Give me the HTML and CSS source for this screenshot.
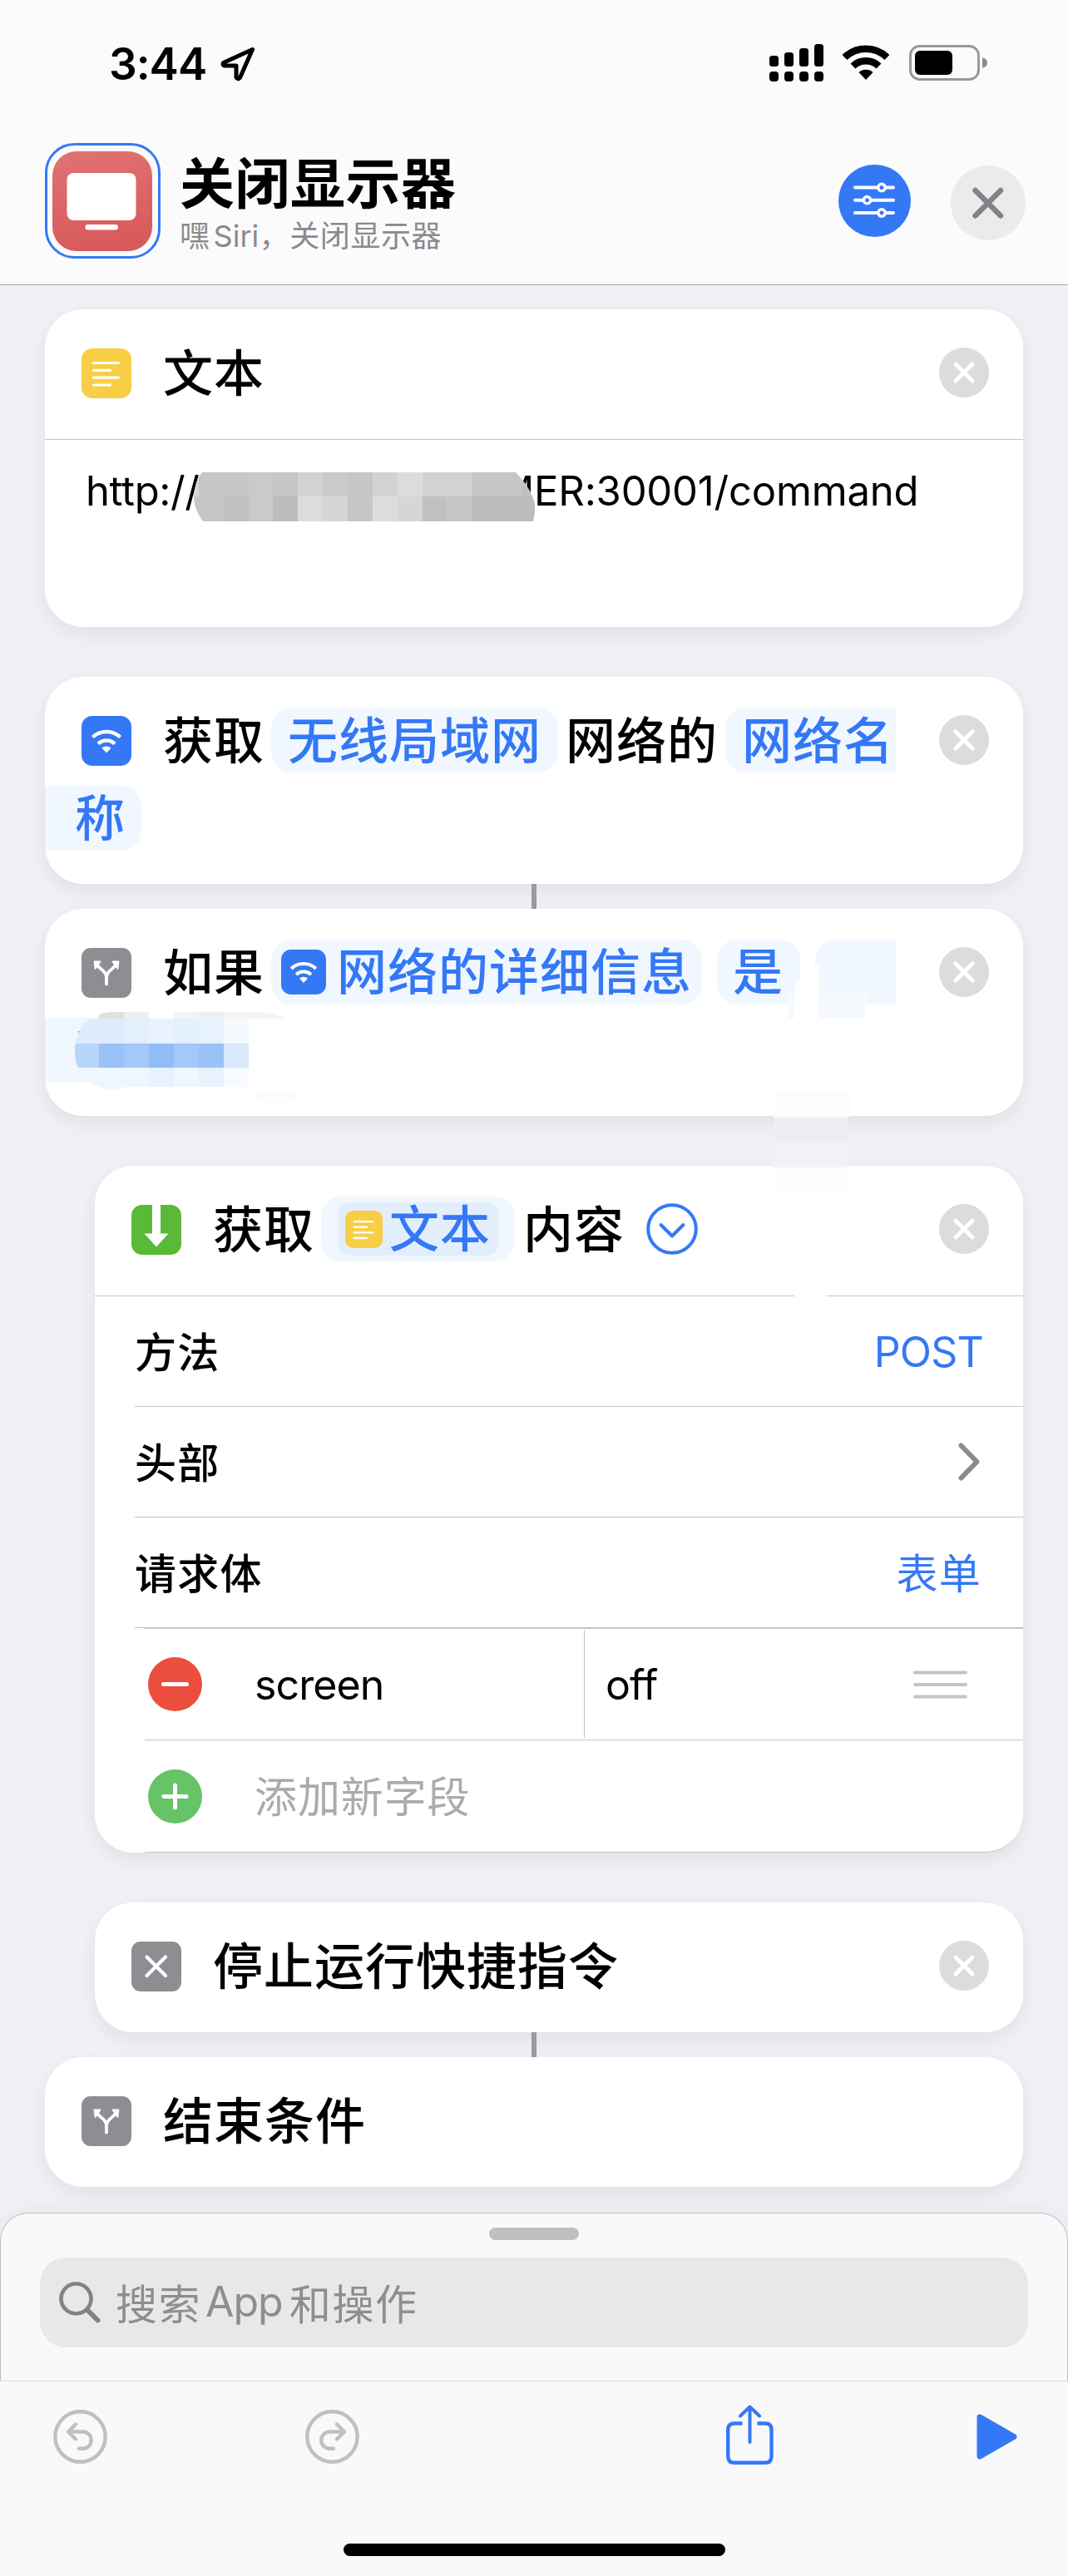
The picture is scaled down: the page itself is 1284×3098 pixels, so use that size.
FILE: index.html
```html
<!DOCTYPE html>
<html lang="zh-CN">
<head>
<meta charset="utf-8">
<title>关闭显示器</title>
<link rel="stylesheet" href="styles.css">
</head>
<body>
<svg class="defs" width="0" height="0">
  <symbol id="clear" viewBox="0 0 60 60"><circle cx="30" cy="30" r="30" fill="#dcdcdc"/><path d="M20 20 40 40M40 20 20 40" stroke="#fff" stroke-width="5" stroke-linecap="round"/></symbol>
  <symbol id="wifi" viewBox="0 0 60 60"><rect width="60" height="60" rx="13" fill="#3478f6"/><path d="M13.5 25.500a24 24 0 0 1 33 0M20 33.500a14.500 14.500 0 0 1 20 0" fill="none" stroke="#fff" stroke-width="4.400"/><path d="M30 44.500 24.500 38.500a8.500 8.500 0 0 1 11 0Z" fill="#fff"/></symbol>
  <symbol id="note" viewBox="0 0 60 60"><rect width="60" height="60" rx="13" fill="#f7ce46"/><path d="M14.500 17.500h30M14.500 26.300h20M14.500 35.200h30M14.500 44h20" stroke="#fff" stroke-width="3.200" stroke-linecap="round"/></symbol>
  <symbol id="branch" viewBox="0 0 60 60"><rect width="60" height="60" rx="11" fill="#8e8d92"/><path d="M30 43.500V37C30 28 24 27 18.500 20.500M30 37C30 28 36 27 41.500 20.500" fill="none" stroke="#fff" stroke-width="3.800" stroke-linecap="round"/><path d="M15.500 16.500h7l-6 8.500ZM44.500 16.500h-7l6 8.500Z" fill="#fff" stroke="#fff" stroke-width="1.800" stroke-linejoin="round"/></symbol>
</svg>

<header class="top">
  <div class="status">
    <div class="time">3:44</div>
    <svg class="locate" width="44" height="44" viewBox="0 0 44 44"><path d="M39.500 4.500 4.500 20.500Q3 23 5.500 24H20V38Q22 41.500 24.500 38.500Z" fill="none" stroke="#000" stroke-width="5" stroke-linejoin="round"/></svg>
    <svg class="signal" width="65" height="45" viewBox="0 0 65 45"><rect y="14" width="11" height="13" rx="3.500"/><rect x="18" y="10" width="11" height="17" rx="3.500"/><rect x="36" y="5" width="11" height="22" rx="3.500"/><rect x="54" width="11" height="27" rx="3.500"/><rect y="33" width="11" height="12" rx="4"/><rect x="18" y="33" width="11" height="12" rx="4"/><rect x="36" y="33" width="11" height="12" rx="4"/><rect x="54" y="33" width="11" height="12" rx="4"/></svg>
    <svg class="wifi" width="58" height="42" viewBox="0 0 58 42"><path d="M3.500 15a37 37 0 0 1 51 0M13.500 25.500a22.500 22.500 0 0 1 31 0" fill="none" stroke="#000" stroke-width="8.600"/><path d="M29 42 20.500 33a13 13 0 0 1 17 0Z"/></svg>
    <svg class="battery" width="96" height="44" viewBox="0 0 96 44"><rect x="1.500" y="1.500" width="82" height="40" rx="11" fill="none" stroke="#999" stroke-width="3"/><rect x="7" y="7" width="45" height="29" rx="6"/><path d="M88 15q6 2 6 6.500T88 28Z" fill="#8c8c8c"/></svg>
  </div>
  <div class="titlebar">
    <svg class="app-icon" width="139" height="139" viewBox="0 0 139 139"><defs><linearGradient id="red" x2=".2" y2="1"><stop stop-color="#e07274"/><stop offset="1" stop-color="#d95a5b"/></linearGradient></defs><rect x="1.500" y="1.500" width="136" height="136" rx="34" fill="none" stroke="#3478f6" stroke-width="3"/><rect x="9" y="10" width="120" height="120" rx="29" fill="url(#red)"/><rect x="26.500" y="36" width="83" height="57" rx="8" fill="#fff"/><rect x="48.500" y="98" width="39.500" height="6.500" rx="3.200" fill="#fff"/></svg>
    <div class="titles">
      <h1>关闭显示器</h1>
      <p><span>嘿</span><span class="siri">Siri</span><span>，关闭显示器</span></p>
    </div>
    <svg class="settings" width="87" height="87" viewBox="0 0 87 87"><circle cx="43.500" cy="43.500" r="43.500" fill="#3478f6"/><g fill="#3478f6" stroke="#fff" stroke-width="4" stroke-linecap="round"><path d="M20 27.500H66M20 42.700H66M20 58H66"/><g stroke-width="3.400"><circle cx="52" cy="27.500" r="4.200"/><circle cx="34.500" cy="42.700" r="4.200"/><circle cx="52" cy="58" r="4.200"/></g></g></svg>
    <svg class="close" width="90" height="90" viewBox="0 0 90 90"><circle cx="45" cy="45" r="45" fill="#ebebed"/><path d="M29.500 30 60 60.500M60 30 29.500 60.500" stroke="#838387" stroke-width="6.500" stroke-linecap="round"/></svg>
  </div>
</header>

<main>
  <section class="card text-card">
    <div class="head"><div class="line"><svg class="icon"><use href="#note"/></svg><b>文本</b><svg class="clear"><use href="#clear"/></svg></div></div>
    <div class="url"><span class="scheme">http://</span><span class="host">MER:30001/command</span>
      <svg class="mosaic" width="410" height="59" viewBox="233 568 410 59" shape-rendering="crispEdges"><clipPath id="pill"><path d="M243 568H620Q635 584 640 597T643 614L641 627H244Q233 612 233 598Q234 579 243 568Z"/></clipPath>
      <g clip-path="url(#pill)"><path fill="#c6c6c6" d="M233 568h410v59H233z"/><path fill="#d6d6d6" d="M233 568h6v29h-6z"/><path fill="#cacaca" d="M299 568h29v29h-29zM388 568h30v29h-30zM299 597h29v30h-29z"/><path fill="#d2d2d2" d="M358 568h30v29h-30zM448 568h30v29h-30zM508 568h59v29h-59zM388 597h30v30h-30z"/><path fill="#dcdcdc" d="M478 568h30v29h-30zM358 597h30v30h-30zM448 597h30v30h-30z"/><path fill="#d6d6d6" d="M478 597h30v30h-30zM388 597h30v30h-30z"/><path fill="#bcbcbc" d="M328 597h30v30h-30zM567 597h76v30h-76z"/><path fill="#c1c1c1" d="M269 597h30v30h-30zM508 597h29v30h-29zM627 568h16v29h-16z"/></g></svg>
    </div>
  </section>

  <section class="card wifi-card">
    <div class="head">
      <div class="line"><svg class="icon"><use href="#wifi"/></svg><b>获取</b><span class="chip net">无线局域网</span><b class="mid">网络的</b><span class="chip open">网络名</span><svg class="clear"><use href="#clear"/></svg></div>
      <div class="line"><span class="chip tail">称</span></div>
    </div>
  </section>
  <i class="link"></i>
  <section class="card if-card">
    <div class="head">
      <div class="line"><svg class="icon"><use href="#branch"/></svg><b>如果</b><span class="chip detail"><svg width="54" height="54"><use href="#wifi"/></svg>网络的详细信息</span><span class="chip is">是</span><span class="chip blank"></span><svg class="clear"><use href="#clear"/></svg></div>
      <div class="line"><span class="chip tail hidden"></span></div>
    </div>
  </section>

  <section class="card inset request">
    <div class="head"><div class="line"><svg class="icon" viewBox="0 0 60 60"><rect width="60" height="60" rx="13" fill="#5aba37"/><path d="M25 0H35V34.500H44.500L30 50.500 15.500 34.500H25Z" fill="#fff"/></svg><b>获取</b><span class="chip outer"><span class="inner"><svg width="45" height="45"><use href="#note"/></svg>文本</span></span><b class="content">内容</b><svg class="expand" width="62" height="62" viewBox="0 0 62 62"><circle cx="31" cy="31" r="28.800" fill="none" stroke="#3478f6" stroke-width="4"/><path d="M17.500 26 31 39.500 44.500 26" fill="none" stroke="#3478f6" stroke-width="4" stroke-linecap="round" stroke-linejoin="round"/></svg><svg class="clear"><use href="#clear"/></svg></div></div>
    <div class="rows">
      <div class="row"><b>方法</b><span class="post">POST</span></div>
      <div class="row"><b>头部</b><svg width="26" height="46" viewBox="0 0 26 46"><path d="M3.500 3.500 22.500 23 3.500 42.500" fill="none" stroke="#8b8b8d" stroke-width="6" stroke-linecap="round" stroke-linejoin="round"/></svg></div>
      <div class="row"><b>请求体</b><span class="form">表单</span></div>
    </div>
    <div class="fields">
      <div class="field"><svg width="65" height="65" viewBox="0 0 65 65"><circle cx="32.500" cy="32.500" r="32.500" fill="#eb4e3d"/><path d="M18.500 32.500h28" stroke="#fff" stroke-width="5" stroke-linecap="round"/></svg><span class="key">screen</span><span class="value">off</span><svg class="grip" width="65" height="34" viewBox="0 0 65 34"><path d="M2 2.500H63M2 17H63M2 31.500H63" stroke="#c4c4c6" stroke-width="4" stroke-linecap="round"/></svg></div>
      <div class="field add"><svg width="65" height="65" viewBox="0 0 65 65"><circle cx="32.500" cy="32.500" r="32.500" fill="#65c466"/><path d="M19 32.500h27M32.500 19v27" stroke="#fff" stroke-width="5" stroke-linecap="round"/></svg><span class="key">添加新字段</span></div>
    </div>
  </section>

  <section class="card inset stop">
    <div class="head"><div class="line"><svg class="icon" viewBox="0 0 60 60"><rect width="60" height="60" rx="11" fill="#8e8d92"/><path d="M18.500 18.500 41 41M41 18.500 18.500 41" stroke="#fff" stroke-width="4.200" stroke-linecap="round"/></svg><b>停止运行快捷指令</b><svg class="clear"><use href="#clear"/></svg></div></div>
  </section>
  <i class="link"></i>
  <section class="card end">
    <div class="head"><div class="line"><svg class="icon"><use href="#branch"/></svg><b>结束条件</b></div></div>
  </section>

  <svg class="redaction" width="1284" height="420" viewBox="0 1160 1284 420" shape-rendering="crispEdges">
    <path fill="#3478f6" d="M94 1240h4v5h-4z"/>
    <clipPath id="blob"><path d="M90 1266Q90 1230 119 1220Q127 1217 138 1217H315Q333 1219 342 1225H299V1312L294 1307H151Q143 1310 135 1310Q122 1310 110 1302Q90 1288 90 1266Z"/></clipPath>
    <g clip-path="url(#blob)">
      <path fill="#f4f4f4" d="M119 1217h225v8H119z"/><path fill="#e0e0e0" d="M119 1217h30v8h-30z"/><path fill="#eee" d="M149 1217h30v8h-30zM239 1217h30v8h-30z"/><path fill="#fff" d="M179 1217h30v8h-30z"/>
      <path fill="#deecfd" d="M90 1225h60v30H90z"/><path fill="#e2f0fd" d="M149 1225h90v30h-90z"/><path fill="#eaf1fe" d="M179 1225h30v30h-30z"/><path fill="#e7f2fd" d="M239 1225h30v30h-30z"/><path fill="#f4faff" d="M269 1225h30v30h-30z"/>
      <path fill="#b8d5fb" d="M90 1255h29v29H90z"/><path fill="#98c2f8" d="M119 1255h150v29H119z"/><path fill="#a4c8f9" d="M149 1255h30v29h-30zM209 1255h30v29h-30z"/><path fill="#90bef7" d="M179 1255h30v29h-30z"/><path fill="#dae9fc" d="M269 1255h30v29h-30z"/>
      <path fill="#eef6fe" d="M90 1284h179v28H90z"/><path fill="#e9f1fe" d="M179 1284h30v28h-30zM239 1284h30v28h-30z"/><path fill="#f7fbff" d="M269 1284h30v28h-30z"/>
    </g>
    <path fill="#fcfcfc" d="M302 1314h62q-12 14-30 14t-32-14Z"/>
    <path fill="#fff" d="M956 1184Q968 1166 985 1160V1225H956Z"/><path fill="#f6fafe" d="M947 1204l2-9h7v30h-9zM985 1195h57q0 20-4 30h-53z"/>
    <path fill="#fcfcfc" d="M932 1314h91l-2 30h-91z"/><path fill="#eeedf2" d="M930 1344h90v30h-90z"/><path fill="#f2f1f7" d="M929 1374h90v30h-90z"/><path fill="#fefefe" d="M929 1404h90v29h-90zM955 1556h39v5h-39z"/>
  </svg>
</main>

<section class="sheet">
  <i class="grabber"></i>
  <div class="search"><svg width="50" height="50" viewBox="0 0 50 50"><circle cx="20.500" cy="20.500" r="18" fill="none" stroke="#828286" stroke-width="4.600"/><path d="M34 34 46.500 46.500" stroke="#828286" stroke-width="6" stroke-linecap="round"/></svg><span>搜索</span><span class="latin">App</span><span>和操作</span></div>
</section>
<footer>
  <div class="tools">
    <svg class="undo" width="65" height="65" viewBox="0 0 65 65"><g fill="none" stroke="#c0c0c0" stroke-width="4.400" stroke-linecap="round" stroke-linejoin="round"><circle cx="32.500" cy="32.500" r="30.200"/><path d="M27 17.500 18 26.500 27 35.500M18 26.500H36.500A10.200 10.200 0 0 1 36.500 46.800H31"/></g></svg>
    <svg class="redo" width="65" height="65" viewBox="0 0 65 65"><g fill="none" stroke="#c0c0c0" stroke-width="4.400" stroke-linecap="round" stroke-linejoin="round"><circle cx="32.500" cy="32.500" r="30.200"/><path d="M38 17.500 47 26.500 38 35.500M47 26.500H28.500A10.200 10.200 0 0 0 28.500 46.800H34"/></g></svg>
    <svg class="share" width="57" height="72" viewBox="0 0 57 72"><g fill="none" stroke="#3478f6" stroke-width="4.400"><path d="M19.500 22.500H10Q2.200 22.500 2.200 30V62Q2.200 69.800 10 69.800H47Q54.500 69.800 54.500 62V30Q54.500 22.500 47 22.500H37.500"/><path d="M28.500 45V3M17 13.500 28.500 2.500 40 13.500" stroke-width="4" stroke-linecap="round" stroke-linejoin="round"/></g></svg>
    <svg class="play" width="49" height="55" viewBox="0 0 49 55"><path d="M4 4 45 27.500 4 51Z" fill="#3478f6" stroke="#3478f6" stroke-width="7" stroke-linejoin="round"/></svg>
  </div>
  <i class="home"></i>
</footer>
</body>
</html>
```
FILE: styles.css
```css
* { box-sizing: border-box; }
body {
  margin: 0;
  width: 1284px;
  height: 3098px;
  overflow: hidden;
  display: flex;
  flex-direction: column;
  background: #f1f0f6;
  color: #000;
  font-family: Inter, "Noto Sans CJK SC", sans-serif;
}
svg { display: block; flex: none; }
i { display: block; }
b { font-weight: 500; }
.defs { position: absolute; }

/* status bar and title */
.top { flex: none; height: 343px; background: #fbfbfb; border-bottom: 1px solid #a9a9ad; }
.status { display: flex; height: 172px; padding: 53px 0 0 131px; align-items: flex-start; }
.time { width: 131px; margin-top: -8px; font-size: 53px; line-height: 64px; font-weight: 600; letter-spacing: -1px; white-space: nowrap; }
.locate { margin: 2px 0 0 2px; }
.signal { margin-left: 617px; }
.wifi { margin: 1px 0 0 22px; }
.battery { margin: 1px 0 0 23px; }
.titlebar { display: flex; padding-left: 54px; align-items: flex-start; }
.titles { width: 400px; margin-left: 23px; }
.titles h1 { margin: 0; padding-top: 9px; font-size: 66px; line-height: 80px; font-weight: 700; letter-spacing: 0.5px; white-space: nowrap; }
.titles p { display: flex; margin: 0; font-size: 36px; line-height: 46px; letter-spacing: 0.6px; color: #8a8a8e; white-space: nowrap; }
.siri { margin-left: 4px; width: 55px; letter-spacing: 0; }
.settings { margin: 26px 0 0 392px; }
.close { margin: 27px 0 0 48px; }

/* action cards */
main { position: relative; flex: none; height: 2318px; padding: 29px 54px 0; display: flex; flex-direction: column; }
.card { flex: none; background: #fff; border-radius: 46px; box-shadow: 0 8px 22px rgba(30, 25, 50, 0.075); }
.inset { margin-left: 60px; }
.head { display: flex; flex-direction: column; gap: 16px; padding: 37px 0 40px; }
.line { display: flex; align-items: center; height: 78px; padding-right: 41px; font-size: 60px; line-height: 78px; letter-spacing: 1px; white-space: nowrap; }
.line b { padding-top: 2px; }
.icon { width: 60px; height: 60px; margin: 2px 38px 0 44px; }
.clear { width: 60px; height: 60px; margin-left: auto; }
.chip { display: flex; align-items: center; height: 78px; border-radius: 24px; background: #f0f7ff; color: #3478f6; font-weight: 500; }
.net, .open { padding-top: 2px; }

.text-card { height: 382px; }
.text-card .head { border-bottom: 1px solid #c4c4c6; height: 157px; }
.url { position: relative; display: flex; padding: 30px 0 0 49px; font-size: 49px; line-height: 64px; white-space: nowrap; }
.scheme { width: 495px; letter-spacing: -0.4px; }
.host { letter-spacing: -0.2px; }
.mosaic { position: absolute; left: 179px; top: 39px; }

.wifi-card { margin-top: 60px; height: 249px; }
.net { width: 345px; margin-left: 8px; padding-left: 20px; }
.mid { margin-left: 9px; width: 192px; }
.open { width: 205px; padding-left: 20px; border-radius: 24px 0 0 24px; }
.tail { width: 116px; padding-left: 36px; border-radius: 0 24px 24px 0; }
.link { flex: none; width: 6px; height: 30px; margin-left: 585px; background: #999aa2; }
.if-card { height: 249px; }
.detail { width: 518px; margin-left: 8px; padding-left: 12px; gap: 13px; }
.is { width: 100px; margin-left: 18px; padding-left: 19px; }
.blank { width: 97px; margin-left: 18px; border-radius: 24px 0 0 24px; }
.hidden { width: 80px; border-radius: 0; }

/* request details */
.request { margin-top: 60px; height: 826px; overflow: visible; }
.request .head { height: 157px; border-bottom: 1px solid #c4c4c6; }
.outer { width: 233px; margin-left: 8px; padding-left: 20px; }
.inner { display: flex; align-items: center; gap: 8px; width: 193px; height: 64px; padding-left: 9px; border-radius: 14px; background: #e3eefd; }
.content { margin-left: 10px; width: 148px; }
.rows { padding-left: 48px; }
.row { display: flex; align-items: center; justify-content: space-between; height: 133px; padding-right: 50px; border-bottom: 1px solid #c4c4c6; font-size: 50px; letter-spacing: 1.2px; }
.row b, .row .form { padding-bottom: 4px; }
.row span { color: #3478f6; }
.row svg { margin-right: 2px; }
.row .post { margin-right: -2px; padding-top: 2px; letter-spacing: -0.8px; }
.fields { padding-left: 60px; }
.field { display: flex; align-items: center; height: 135px; padding-left: 4px; border-bottom: 1px solid #c4c4c6; border-top: 1px solid #c4c4c6; font-size: 50px; letter-spacing: -0.9px; }
.key { width: 396px; margin-left: 63px; }
.value { display: flex; align-items: center; height: 129px; width: 396px; padding-left: 25px; border-left: 1px solid #c4c4c6; }
.add { border-top: 0; font-size: 51px; letter-spacing: 0.9px; color: #ababab; border-radius: 0 0 46px 0; }
.add .key { padding-bottom: 4px; }

.stop { margin-top: 60px; height: 156px; }
.end { height: 156px; }
.redaction { position: absolute; left: 0; top: 817px; }

/* search sheet and toolbar */
.sheet { position: relative; flex: none; height: 202px; padding: 17px 47px 0; border: 1px solid #c0c0c2; border-bottom: 0; border-radius: 34px 34px 0 0; background: #f9f9f9; box-shadow: 0 0 24px rgba(30, 25, 50, 0.06); }
.grabber { width: 108px; height: 15px; margin: 0 auto 21px; border-radius: 8px; background: #bfbfc1; }
.search { display: flex; align-items: center; height: 108px; padding-left: 23px; border-radius: 31px; background: #e8e8e8; color: #8e8d92; font-size: 50px; letter-spacing: 1.5px; white-space: nowrap; }
.search svg { margin-right: 18px; }
.search span { padding-bottom: 3px; }
.search .latin { width: 101px; margin-left: 5px; letter-spacing: -1px; }
footer { position: relative; flex: none; height: 235px; border-top: 1px solid #dcdcdc; background: #f9f9fa; }
.tools { display: flex; height: 195px; padding: 28px 0 0 64px; }
.undo, .redo { margin-top: 6px; }
.redo { margin-left: 238px; }
.share { margin-left: 441px; }
.play { margin: 11px 0 0 244px; }
.home { width: 459px; height: 15px; margin: 0 0 0 413px; border-radius: 8px; background: #000; }
```
